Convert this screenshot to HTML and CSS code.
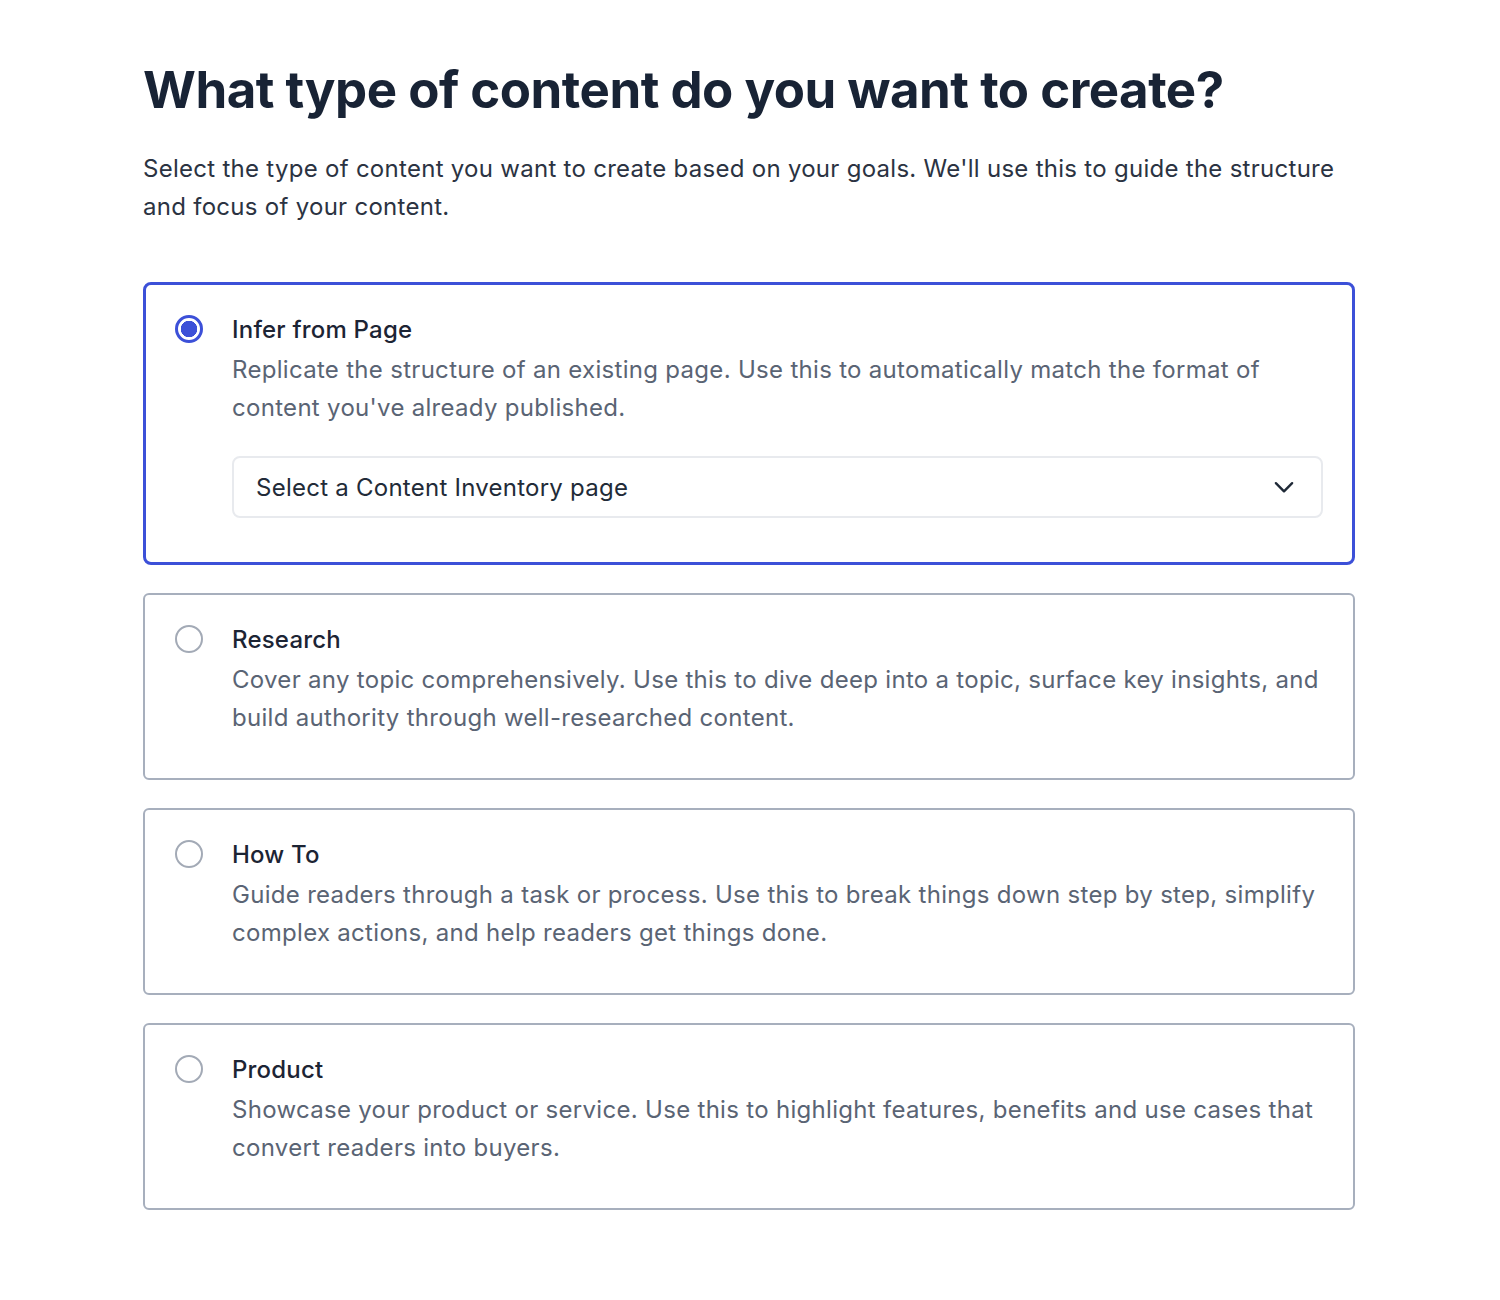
FILE: index.html
```html
<!DOCTYPE html>
<html lang="en">
<head>
    <meta charset="UTF-8">
    <meta name="viewport" content="width=device-width, initial-scale=1.0">
    <title>Content Type</title>
    <link rel="stylesheet" href="styles.css">
</head>
<body>
    <main class="page">
        <h1>What type of content do you want to create?</h1>
        <p class="intro">Select the type of content you want to create based on your goals. We'll use this to guide the structure and focus of your content.</p>

        <div class="options">
            <label class="option selected">
                <span class="radio checked"></span>
                <div class="option-body">
                    <div class="option-title">Infer from Page</div>
                    <div class="option-desc">Replicate the structure of an existing page. Use this to automatically match the format of content you've already published.</div>
                    <div class="select">
                        <span>Select a Content Inventory page</span>
                        <svg width="26" height="26" viewBox="0 0 24 24" fill="none" stroke="#1f2937" stroke-width="2.2" stroke-linecap="round" stroke-linejoin="round"><path d="M4.5 8.5l7.5 7.5 7.5-7.5"/></svg>
                    </div>
                </div>
            </label>

            <label class="option">
                <span class="radio"></span>
                <div class="option-body">
                    <div class="option-title">Research</div>
                    <div class="option-desc">Cover any topic comprehensively. Use this to dive deep into a topic, surface key insights, and build authority through well-researched content.</div>
                </div>
            </label>

            <label class="option">
                <span class="radio"></span>
                <div class="option-body">
                    <div class="option-title">How To</div>
                    <div class="option-desc">Guide readers through a task or process. Use this to break things down step by step, simplify complex actions, and help readers get things done.</div>
                </div>
            </label>

            <label class="option">
                <span class="radio"></span>
                <div class="option-body">
                    <div class="option-title">Product</div>
                    <div class="option-desc">Showcase your product or service. Use this to highlight features, benefits and use cases that convert readers into buyers.</div>
                </div>
            </label>
        </div>
    </main>
</body>
</html>
```

FILE: styles.css
```css
body {
    margin: 0;
    font-family: Inter, "Noto Sans", sans-serif;
    background: #fff;
    color: #1f2937;
}
.page {
    width: 1212px;
    padding: 56px 0 60px 143px;
}
h1 {
    margin: 0;
    font-size: 51px;
    font-weight: 700;
    line-height: 68px;
    letter-spacing: -0.5px;
    color: #182335;
}
.intro {
    margin: 26px 0 0;
    font-size: 24px;
    line-height: 38px;
    letter-spacing: 0.28px;
    color: #2b3342;
}
.options {
    display: flex;
    flex-direction: column;
    gap: 28px;
    margin-top: 56px;
}
.option {
    display: flex;
    gap: 29px;
    padding: 24px 30px 41px;
    border: 2px solid #a7afbd;
    border-radius: 6px;
    cursor: pointer;
}
.option.selected {
    border: 3px solid #3c50d8;
    border-radius: 8px;
    padding: 24px 29px 44px;
}
.radio {
    flex: none;
    width: 28px;
    height: 28px;
    margin-top: 6px;
    border: 2px solid #a3aab6;
    border-radius: 50%;
    box-sizing: border-box;
}
.radio.checked {
    border: 3px solid #3c50d8;
    background: radial-gradient(circle, #3c50d8 0 8px, #fff 8.5px);
}
.option-body {
    flex: 1;
}
.option-title {
    font-size: 24px;
    font-weight: 500;
    line-height: 42px;
    letter-spacing: 0.2px;
    color: #1c2434;
}
.option-desc {
    font-size: 24px;
    line-height: 38px;
    letter-spacing: 0.3px;
    color: #5a6474;
}
.select {
    display: flex;
    align-items: center;
    justify-content: space-between;
    height: 62px;
    margin-top: 29px;
    padding: 0 24px 0 22px;
    border: 2px solid #e8eaee;
    border-radius: 8px;
    box-sizing: border-box;
    font-size: 24px;
    letter-spacing: 0.25px;
    color: #222b38;
}
```
